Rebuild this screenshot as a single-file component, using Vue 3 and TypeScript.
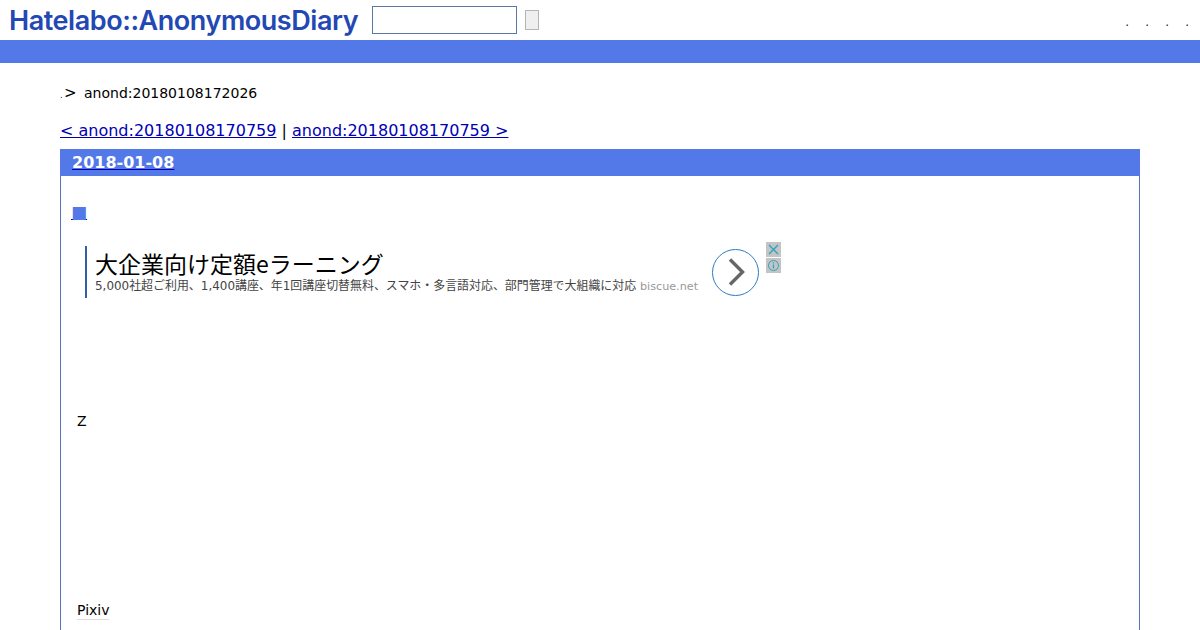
<template>
  <div class="page">
    <header class="top">
      <h1 class="logo">Hatelabo::AnonymousDiary</h1>
      <form class="search" @submit.prevent>
        <input class="search-input" type="text" />
        <button class="search-btn" type="submit"></button>
      </form>
      <ul class="menu">
        <li v-for="n in 4" :key="n">.</li>
      </ul>
    </header>
    <div class="bar"></div>

    <main class="main">
      <p class="crumb"><span class="dot">.</span><span class="gt">&gt;</span><span>anond:20180108172026</span></p>
      <p class="pager">
        <a href="#">&lt; anond:20180108170759</a> | <a href="#">anond:20180108170759 &gt;</a>
      </p>

      <section class="day">
        <h2 class="day-title"><a href="#"><span>2018-01-08</span></a></h2>
        <div class="day-body">
          <a class="mark" href="#"><span>■</span></a>

          <div class="ad">
            <div class="ad-copy">
              <div class="ad-title">大企業向け定額eラーニング</div>
              <div class="ad-sub">5,000社超ご利用、1,400講座、年1回講座切替無料、スマホ・多言語対応、部門管理で大組織に対応 <span class="ad-domain">biscue.net</span></div>
            </div>
            <div class="ad-go">
              <svg width="47" height="47" viewBox="0 0 47 47">
                <circle cx="23.5" cy="23.5" r="23" fill="#fff" stroke="#2f7ac4" stroke-width="1" />
                <path d="M18 10.5 L30.5 23 L18 35.5" fill="none" stroke="#666" stroke-width="3.4" />
              </svg>
            </div>
            <div class="ad-tools">
              <svg width="15" height="15" viewBox="0 0 15 15">
                <rect width="15" height="15" fill="#c4c4c4" />
                <path d="M3 3 L12 12 M12 3 L3 12" stroke="#2aa3c4" stroke-width="1.4" />
              </svg>
              <svg width="15" height="15" viewBox="0 0 15 15">
                <rect width="15" height="15" fill="#c4c4c4" />
                <circle cx="7.5" cy="7.5" r="5" fill="none" stroke="#2aa3c4" stroke-width="1" />
                <path d="M7.5 6.5 V10.5 M7.5 4.2 V5.4" stroke="#2aa3c4" stroke-width="1.2" />
              </svg>
            </div>
          </div>

          <p class="line-z">Z</p>
          <p class="line-pixiv"><span>Pixiv</span></p>
        </div>
      </section>
    </main>
  </div>
</template>

<script setup lang="ts">
</script>

<style>
html,
body {
  margin: 0;
  background: #fff;
  overflow: hidden;
}
</style>

<style scoped>
.page {
  font-family: 'DejaVu Sans', sans-serif;
  color: #000;
  height: 630px;
  overflow: hidden;
}

.top {
  height: 40px;
  display: flex;
  align-items: center;
  padding: 0 9px;
}

.logo {
  margin: 0;
  font-family: 'Inter', sans-serif;
  font-size: 27px;
  font-weight: 600;
  color: #2348b4;
  width: 363px;
  white-space: nowrap;
  letter-spacing: -0.44px;
}

.search {
  display: flex;
  align-items: center;
  gap: 8px;
}

.search-input {
  width: 145px;
  height: 28px;
  box-sizing: border-box;
  border: 1px solid #5b78a8;
  padding: 0;
  background: #fff;
}

.search-btn {
  width: 14px;
  height: 20px;
  padding: 0;
  box-sizing: border-box;
  border: 1px solid #b5b5b5;
  background: #efefef;
}

.menu {
  list-style: none;
  display: flex;
  gap: 16.2px;
  margin: 0 0 0 auto;
  padding: 4px 2px 0 0;
  font-size: 12px;
  color: #222;
}

.bar {
  height: 23px;
  background: #5279e7;
}

.main {
  padding: 0 60px;
}

.crumb {
  margin: 21px 0 0;
  font-size: 14px;
  line-height: 18px;
  display: flex;
}

.dot {
  font-size: 8px;
  width: 4px;
  line-height: 12px;
  margin-top: 6px;
}

.gt {
  width: 20px;
  font-size: 15px;
  line-height: 18px;
}

.pager {
  margin: 19px 0 0;
  font-size: 16px;
  line-height: 19px;
}

.pager a {
  color: #0000b4;
}

.day {
  margin-top: 9px;
  border: 1px solid #5a74b8;
  border-top: 0;
  height: 500px;
}

.day-title {
  margin: 0 -1px;
  height: 27px;
  padding-left: 12px;
  background: #5279e7;
  font-size: 16px;
  line-height: 27px;
  font-weight: 700;
}

.day-title a {
  color: #0000b4;
}

.day-title span {
  color: #fff;
}

.day-body {
  padding: 0 0 0 11px;
}

.mark {
  display: block;
  width: 15px;
  margin: 26px 0 0 -1px;
  font-size: 17px;
  line-height: 20px;
  color: #0000b4;
}

.mark span {
  color: #5279e7;
}

.ad {
  display: flex;
  margin: 20px 0 0 13px;
  height: 56px;
}

.ad-copy {
  border-left: 2px solid #2f5fa8;
  height: 52px;
  margin-top: 4px;
  padding-left: 8px;
  width: 617px;
}

.ad-title {
  font-family: 'Noto Sans CJK JP', sans-serif;
  font-size: 23px;
  line-height: 32px;
  margin-top: 1px;
  white-space: nowrap;
}

.ad-sub {
  font-family: 'DejaVu Sans', 'Noto Sans CJK JP', sans-serif;
  font-size: 11.95px;
  line-height: 14px;
  color: #444;
  white-space: nowrap;
}

.ad-domain {
  color: #999;
  font-size: 11.2px;
}

.ad-go {
  margin-top: 7px;
}

.ad-tools {
  display: flex;
  flex-direction: column;
  gap: 1px;
  margin-left: 7px;
}

.ad-tools svg {
  display: block;
}

.line-z {
  margin: 114px 0 0 5px;
  font-size: 14px;
  line-height: 18px;
}

.line-pixiv {
  margin: 171px 0 0 5px;
  font-size: 14px;
  line-height: 18px;
}

.line-pixiv span {
  display: inline-block;
  border-bottom: 1px solid #ddd;
  line-height: 18px;
}
</style>
